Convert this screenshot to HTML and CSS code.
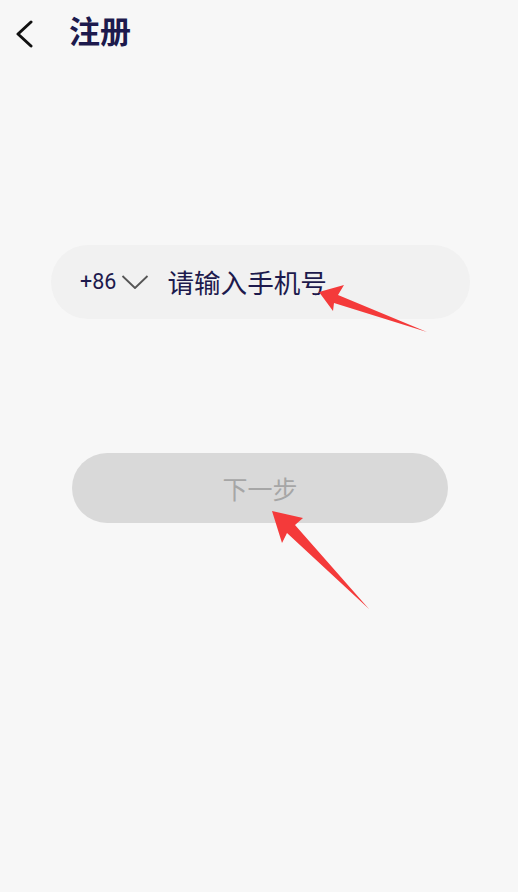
FILE: index.html
```html
<!DOCTYPE html>
<html lang="zh">
<head>
<meta charset="utf-8">
<title>注册</title>
<link rel="stylesheet" href="styles.css">
</head>
<body>
<div class="page">
  <header class="topbar">
    <svg class="back" width="20" height="28" viewBox="0 0 20 28"><path d="M17 2 L4 14 L17 26" fill="none" stroke="#111" stroke-width="3" stroke-linecap="round" stroke-linejoin="round"/></svg>
    <h1 class="title">注册</h1>
  </header>
  <main class="content">
    <div class="phone-field">
      <span class="code">+86</span>
      <svg class="caret" width="28" height="16" viewBox="0 0 28 16"><path d="M1.5 2 L14 14 L26.5 2" fill="none" stroke="#555" stroke-width="1.8" stroke-linejoin="round"/></svg>
      <span class="placeholder">请输入手机号</span>
    </div>
    <button class="next">下一步</button>
  </main>
  <svg class="annot" width="518" height="892" viewBox="0 0 518 892">
    <path d="M319 292 L344 285 L338 295 L427 332 L334 303 L333 311 Z" fill="#f43a3a"/>
    <path d="M272 511 L303 518 L295 525 L369 609 L287 533 L282 543 Z" fill="#f43a3a"/>
  </svg>
</div>
</body>
</html>
```
FILE: styles.css
```css
html, body {
  margin: 0;
  padding: 0;
  background: #f7f7f7;
}
body {
  font-family: "Noto Sans", "Noto Sans CJK SC", sans-serif;
}
.page {
  position: relative;
  width: 518px;
  height: 892px;
  overflow: hidden;
}
.topbar {
  display: flex;
  align-items: center;
  height: 66px;
  padding-left: 14px;
}
.back {
  display: block;
  margin-top: 2px;
}
.title {
  margin: 0 0 7px 35px;
  font-family: "Noto Sans CJK SC", sans-serif;
  font-size: 31px;
  font-weight: 700;
  color: #1d1a4d;
  line-height: 1;
}
.content {
  display: flex;
  flex-direction: column;
  padding-top: 179px;
}
.phone-field {
  display: flex;
  align-items: center;
  box-sizing: border-box;
  margin-left: 51px;
  width: 419px;
  height: 74px;
  border-radius: 37px;
  background: #f1f1f1;
  padding-left: 29px;
}
.code {
  font-family: "Roboto", "Noto Sans", sans-serif;
  font-size: 21.5px;
  color: #1d1a4d;
  line-height: 1;
}
.caret {
  display: block;
  margin-left: 5px;
}
.placeholder {
  margin-left: 18px;
  font-family: "Noto Sans CJK SC", sans-serif;
  font-size: 26.6px;
  color: #1d1a4d;
  line-height: 1;
}
.next {
  margin: 134px 0 0 72px;
  width: 376px;
  height: 70px;
  border: none;
  border-radius: 35px;
  background: #d9d9d9;
  color: #a6a6a6;
  font-family: "Noto Sans CJK SC", sans-serif;
  font-size: 25px;
  padding: 0;
}
.annot {
  position: absolute;
  left: 0;
  top: 0;
  pointer-events: none;
}
```
